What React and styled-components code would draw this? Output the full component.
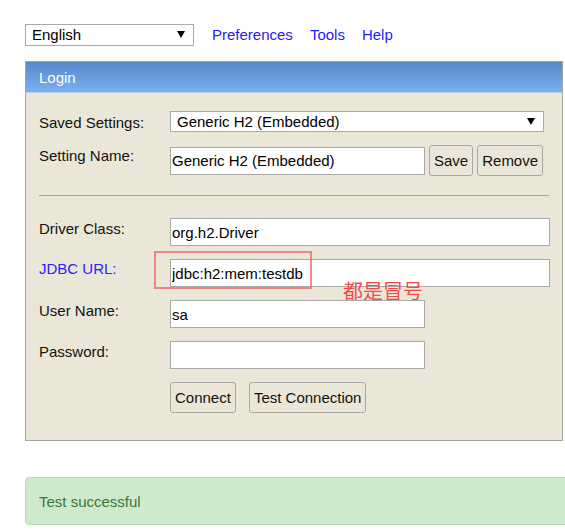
import React from "react";
import styled, { createGlobalStyle } from "styled-components";

const GlobalStyle = createGlobalStyle`
  html, body {
    margin: 0;
    padding: 0;
    background: #fff;
    overflow: hidden;
  }
  body {
    font-family: "Liberation Sans", Arial, sans-serif;
    font-size: 15px;
    color: #111;
  }
`;

const Page = styled.div`
  padding: 24px 0 0 25px;
  width: 560px;
`;

const TopBar = styled.div`
  display: flex;
  align-items: center;
  height: 21px;
`;

const FakeSelect = styled.div`
  box-sizing: border-box;
  display: flex;
  align-items: center;
  justify-content: space-between;
  width: ${(p) => p.width}px;
  height: ${(p) => p.height || 21}px;
  padding: 0 8px 0 6px;
  background: #fff;
  border: 1px solid #a9a9a9;
  color: #000;
  font-size: 15px;
  line-height: 1;
`;

const Link = styled.a`
  margin-left: ${(p) => p.gap}px;
  color: #1f1aff;
  text-decoration: none;
  font-size: 15px;
`;

const Panel = styled.section`
  box-sizing: border-box;
  width: 538px;
  margin-top: 16px;
  background: #ebe7d8;
  border: 1px solid #a8a596;
`;

const PanelHeader = styled.div`
  height: 30px;
  display: flex;
  align-items: center;
  padding-left: 13px;
  background: linear-gradient(to bottom, #5a88c9, #78b0f2);
  border-bottom: 1px solid #b8c9da;
  color: #fff;
  font-size: 15px;
`;

const PanelBody = styled.div`
  padding: 18px 12px 27px 13px;
  display: flex;
  flex-direction: column;
`;

const Row = styled.div`
  position: relative;
  display: flex;
  align-items: center;
  margin-top: ${(p) => p.top || 0}px;
`;

const Label = styled.div`
  width: 131px;
  flex: none;
  align-self: flex-start;
  padding-top: ${(p) => p.pad ?? 2}px;
  color: ${(p) => (p.link ? "#2a22ff" : "#111")};
`;

const TextInput = styled.input`
  box-sizing: border-box;
  width: ${(p) => p.width}px;
  height: 28px;
  margin: 0;
  padding: 0 1px;
  border: 1px solid #a9a9a9;
  border-radius: 0;
  background: #fff;
  font-family: "Liberation Sans", Arial, sans-serif;
  font-size: 15px;
  color: #000;
  outline: none;
`;

const Button = styled.button`
  box-sizing: border-box;
  height: 31px;
  margin: 0 0 0 ${(p) => p.gap || 0}px;
  padding: 0 4px;
  background: #ebe7d8;
  border: 1px solid #aaa79c;
  border-radius: 3px;
  font-family: "Liberation Sans", Arial, sans-serif;
  font-size: 15px;
  color: #111;
`;

const Separator = styled.hr`
  width: 510px;
  margin: 19px 0 22px;
  border: none;
  border-top: 1px solid #a6a6a0;
  height: 0;
`;

const Highlight = styled.div`
  position: absolute;
  left: 115px;
  top: -8px;
  width: 158px;
  height: 38px;
  box-sizing: border-box;
  border: 2px solid rgba(238, 100, 100, 0.75);
  pointer-events: none;
`;

const Note = styled.div`
  position: absolute;
  left: 304px;
  top: 21px;
  font-family: "Noto Sans CJK SC", sans-serif;
  font-size: 20px;
  line-height: 22px;
  color: #f34a4a;
  white-space: nowrap;
`;

const Alert = styled.div`
  box-sizing: border-box;
  width: 560px;
  height: 48px;
  margin-top: 36px;
  padding-left: 13px;
  display: flex;
  align-items: center;
  background: #cdebcc;
  border: 1px solid #b6dfb5;
  border-radius: 4px;
  color: #3c763d;
  font-size: 15px;
`;

const Arrow = () => (
  <svg width="8" height="7" viewBox="0 0 8 7">
    <polygon points="0,0 8,0 4,7" fill="#000" />
  </svg>
);

export default function App() {
  return (
    <Page>
      <GlobalStyle />
      <TopBar>
        <FakeSelect width={169} height={22}>
          <span>English</span>
          <Arrow />
        </FakeSelect>
        <Link href="#" gap={18}>Preferences</Link>
        <Link href="#" gap={17}>Tools</Link>
        <Link href="#" gap={17}>Help</Link>
      </TopBar>

      <Panel>
        <PanelHeader>Login</PanelHeader>
        <PanelBody>
          <Row>
            <Label pad={3}>Saved Settings:</Label>
            <FakeSelect width={374}>
              <span>Generic H2 (Embedded)</span>
              <Arrow />
            </FakeSelect>
          </Row>
          <Row top={13}>
            <Label>Setting Name:</Label>
            <TextInput width={255} defaultValue="Generic H2 (Embedded)" />
            <Button gap={4}>Save</Button>
            <Button gap={4}>Remove</Button>
          </Row>

          <Separator />

          <Row>
            <Label>Driver Class:</Label>
            <TextInput width={380} defaultValue="org.h2.Driver" />
          </Row>
          <Row top={13}>
            <Label link pad={1}>JDBC URL:</Label>
            <TextInput width={380} defaultValue="jdbc:h2:mem:testdb" />
            <Highlight />
            <Note>都是冒号</Note>
          </Row>
          <Row top={13}>
            <Label>User Name:</Label>
            <TextInput width={255} defaultValue="sa" />
          </Row>
          <Row top={13}>
            <Label>Password:</Label>
            <TextInput width={255} type="password" defaultValue="" />
          </Row>
          <Row top={13}>
            <Label />
            <Button>Connect</Button>
            <Button gap={13}>Test Connection</Button>
          </Row>
        </PanelBody>
      </Panel>

      <Alert>Test successful</Alert>
    </Page>
  );
}
